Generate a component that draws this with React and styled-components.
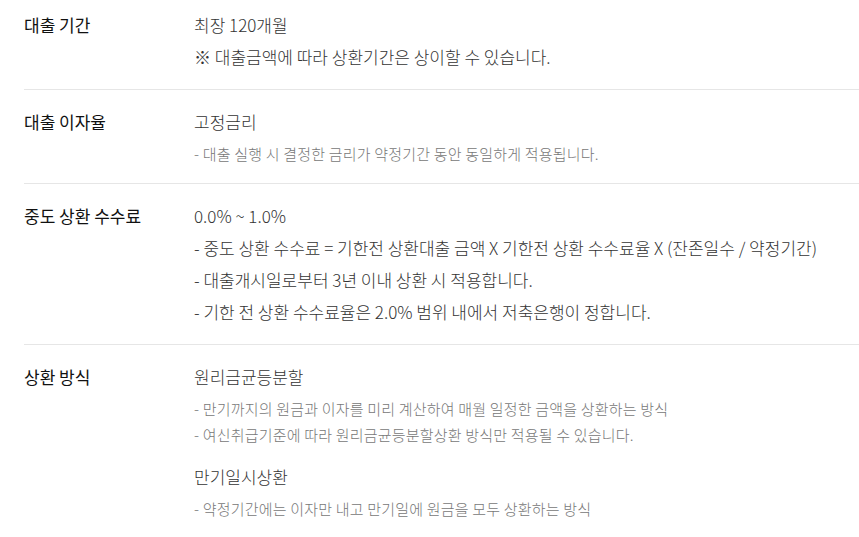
import React from "react";
import styled, { createGlobalStyle } from "styled-components";

const GlobalStyle = createGlobalStyle`
    body {
        margin: 0;
        background: #fff;
        font-family: "Noto Sans CJK KR", "Noto Sans", sans-serif;
    }
`

const Wrapper = styled.div`
    padding-left: 24px;
`

const Row = styled.div`
    display: grid;
    grid-template-columns: 170px 1fr;
    padding: ${(p) => (p.$first ? "9px" : "16px")} 0 16px;
    border-bottom: ${(p) => (p.$last ? "none" : "1px solid #e6e6e6")};
`

const Label = styled.div`
    font-size: 17px;
    font-weight: 400;
    line-height: 32px;
    color: #111;
    white-space: nowrap;
`

const Content = styled.div`
    display: flex;
    flex-direction: column;
`

const Line = styled.div`
    font-size: 17px;
    font-weight: 300;
    line-height: 32px;
    color: #333;
    white-space: nowrap;
`

const Notes = styled.div`
    display: flex;
    flex-direction: column;
    margin-top: 3px;
`

const Note = styled.div`
    font-size: 15px;
    font-weight: 300;
    line-height: 26px;
    letter-spacing: 0.2px;
    color: #777;
    white-space: nowrap;
`

const Group = styled.div`
    display: flex;
    flex-direction: column;
    & + & {
        margin-top: 13px;
    }
`

const rows = [
    {
        label: "대출 기간",
        lines: ["최장 120개월", "※ 대출금액에 따라 상환기간은 상이할 수 있습니다."],
    },
    {
        label: "대출 이자율",
        groups: [
            {
                title: "고정금리",
                notes: ["- 대출 실행 시 결정한 금리가 약정기간 동안 동일하게 적용됩니다."],
            },
        ],
    },
    {
        label: "중도 상환 수수료",
        lines: [
            "0.0% ~ 1.0%",
            "- 중도 상환 수수료 = 기한전 상환대출 금액 X 기한전 상환 수수료율 X (잔존일수 / 약정기간)",
            "- 대출개시일로부터 3년 이내 상환 시 적용합니다.",
            "- 기한 전 상환 수수료율은 2.0% 범위 내에서 저축은행이 정합니다.",
        ],
    },
    {
        label: "상환 방식",
        groups: [
            {
                title: "원리금균등분할",
                notes: [
                    "- 만기까지의 원금과 이자를 미리 계산하여 매월 일정한 금액을 상환하는 방식",
                    "- 여신취급기준에 따라 원리금균등분할상환 방식만 적용될 수 있습니다.",
                ],
            },
            {
                title: "만기일시상환",
                notes: ["- 약정기간에는 이자만 내고 만기일에 원금을 모두 상환하는 방식"],
            },
        ],
    },
];

export default function App() {
    return (
        <>
            <GlobalStyle />
            <Wrapper>
                {rows.map((row, i) => (
                    <Row key={row.label} $first={i === 0} $last={i === rows.length - 1}>
                        <Label>{row.label}</Label>
                        <Content>
                            {row.lines && row.lines.map((t) => <Line key={t}>{t}</Line>)}
                            {row.groups &&
                                row.groups.map((g) => (
                                    <Group key={g.title}>
                                        <Line>{g.title}</Line>
                                        <Notes>
                                            {g.notes.map((n) => (
                                                <Note key={n}>{n}</Note>
                                            ))}
                                        </Notes>
                                    </Group>
                                ))}
                        </Content>
                    </Row>
                ))}
            </Wrapper>
        </>
    );
}
